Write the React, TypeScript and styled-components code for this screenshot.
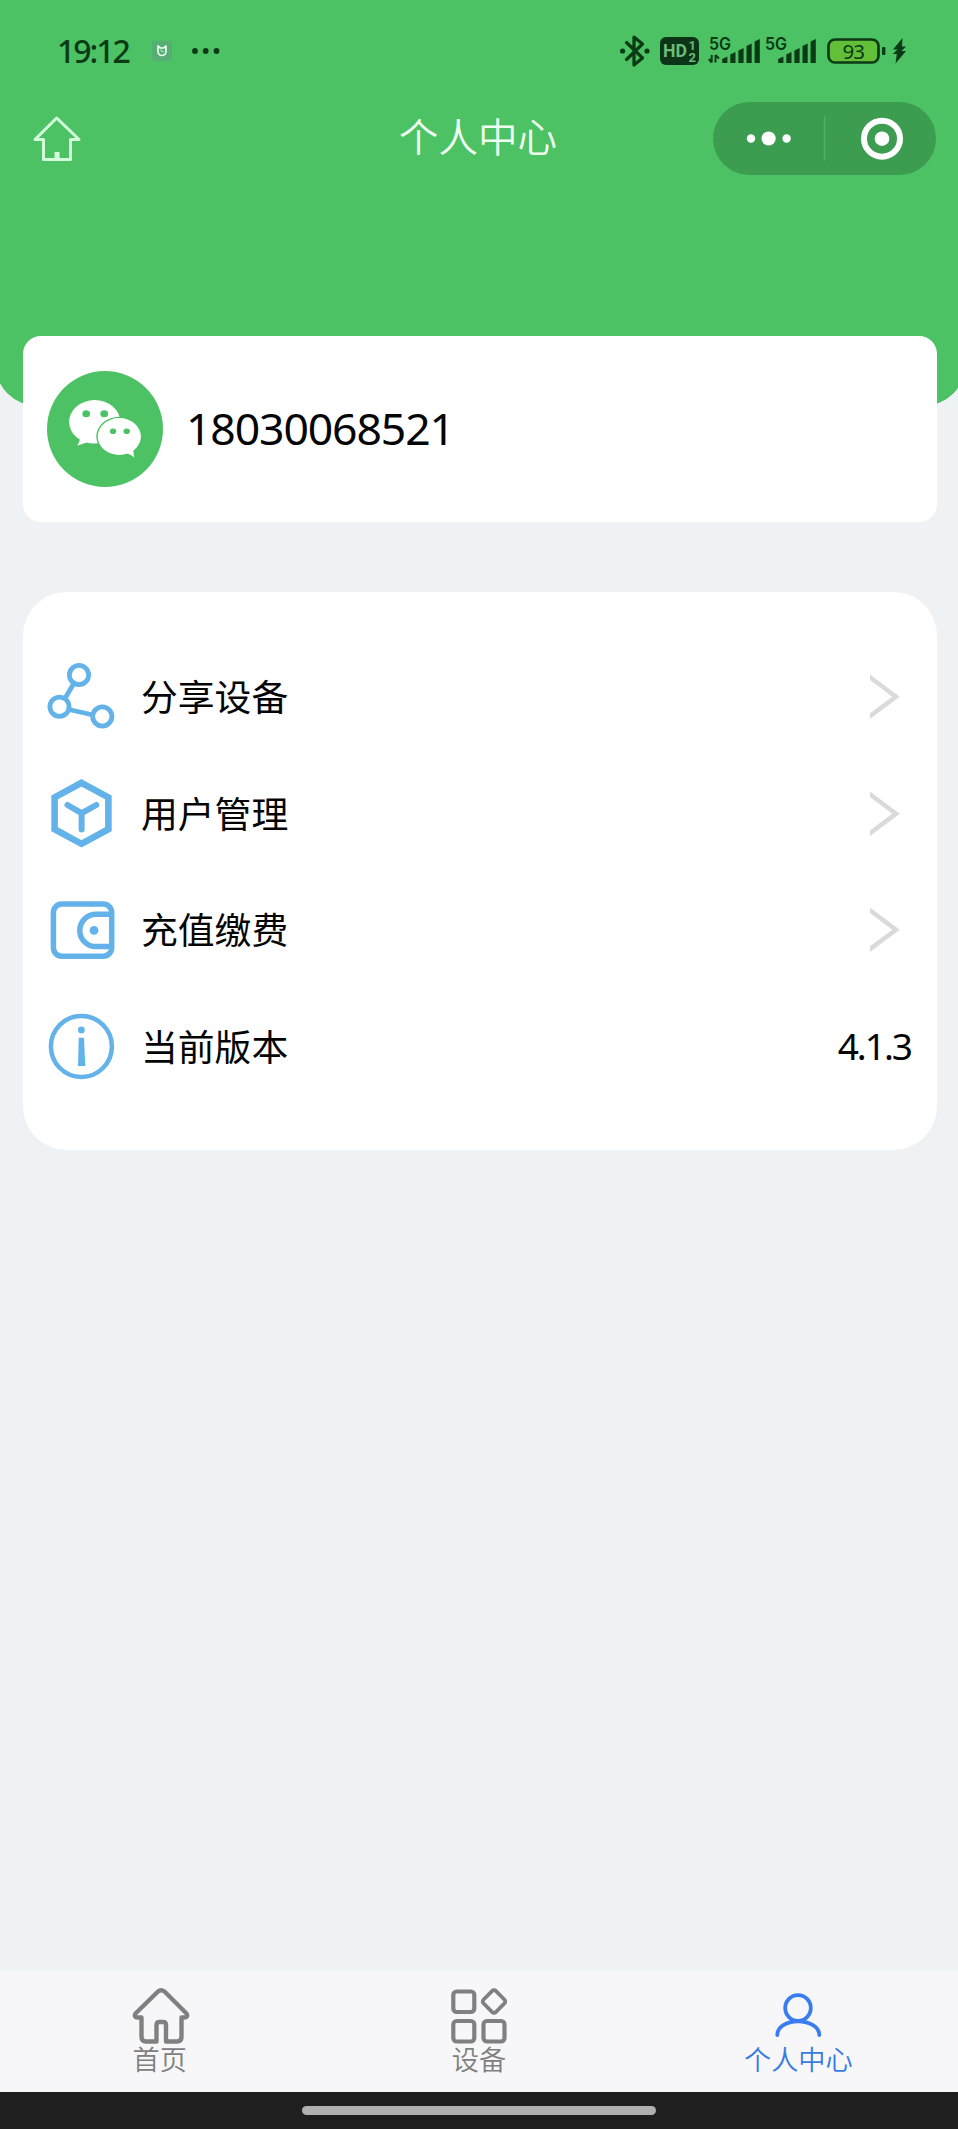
import React from "react";
import styled, { createGlobalStyle } from "styled-components";

const INK = "#0b3a15";
const GREEN = "#4cc264";
const BLUE = "#63b3ea";

const GlobalStyle = createGlobalStyle`
  * { box-sizing: border-box; }
  body {
    margin: 0;
    background: #eff2f5;
    font-family: "Noto Sans", "Noto Sans CJK SC", sans-serif;
    color: #050505;
  }
  svg { display: block; flex: none; }
`;

const Screen = styled.div`
  display: flex;
  flex-direction: column;
  width: 958px;
  height: 2129px;
  overflow: hidden;
  background: #eff2f5;
`;

const Header = styled.header`
  flex: none;
  height: 406px;
  margin: 0 -8px 0 -5px;
  padding: 0 8px 0 5px;
  background: ${GREEN};
  border-radius: 0 0 43px 43px;
`;

const StatusBar = styled.div`
  display: flex;
  align-items: center;
  height: 102px;
  padding: 0 51px 0 57px;
  color: ${INK};
`;

const Clock = styled.span`
  width: 92px;
  font-size: 32px;
  font-weight: 500;
  line-height: 102px;
  letter-spacing: -2px;
`;

const StatusRight = styled.div`
  display: flex;
  align-items: center;
  margin-left: auto;
`;

const Spacer = styled.div<{ $w: number }>`
  flex: none;
  width: ${(p) => p.$w}px;
`;

const NavBar = styled.div`
  display: grid;
  grid-template-columns: 1fr auto 1fr;
  align-items: center;
  height: 73px;
  padding: 0 22px 0 33px;
`;

const Title = styled.h1`
  margin: 0 13px 3px 0;
  font-size: 39.6px;
  font-weight: 350;
  line-height: 60px;
  color: #effff0;
`;

const Capsule = styled.div`
  justify-self: end;
  display: flex;
  align-items: center;
  width: 223px;
  height: 73px;
  border-radius: 37px;
  background: #3c9d51;
`;

const Content = styled.main`
  flex: 1;
  margin-top: -70px;
  padding: 0 21px 0 23px;
`;

const ProfileCard = styled.section`
  display: flex;
  align-items: center;
  height: 186px;
  padding-left: 24px;
  border-radius: 18px;
  background: #fff;
`;

const Phone = styled.span`
  margin: 0 0 2px 23px;
  font-size: 44.5px;
  line-height: 60px;
  letter-spacing: -1.1px;
`;

const MenuCard = styled.section`
  margin-top: 70px;
  height: 558px;
  padding: 46px 25px 0 24px;
  border-radius: 44px;
  background: #fff;
`;

const MenuRow = styled.div`
  display: flex;
  align-items: center;
  height: 116.6px;
`;

const RowLabel = styled.span`
  flex: 1;
  margin: 0 0 2px 26px;
  font-family: "Noto Sans CJK SC", sans-serif;
  font-size: 36.8px;
  line-height: 54px;
`;

const Version = styled.span`
  padding-right: 1px;
  font-size: 37px;
  line-height: 54px;
  letter-spacing: -2px;
`;

const TabBar = styled.nav`
  flex: none;
  display: grid;
  grid-template-columns: repeat(3, 1fr);
  height: 122px;
  background: #f7f7f9;
`;

const Tab = styled.div<{ $active?: boolean }>`
  display: flex;
  flex-direction: column;
  align-items: center;
  padding-top: 16px;
  color: ${(p) => (p.$active ? "#3a7be0" : "#808080")};
`;

const TabLabel = styled.span`
  height: 32px;
  margin-top: -4px;
  font-family: "Noto Sans CJK SC", sans-serif;
  font-size: 27.2px;
  font-weight: 350;
  line-height: 32px;
`;

const GestureBar = styled.div`
  flex: none;
  display: flex;
  justify-content: center;
  height: 37px;
  padding-top: 14px;
  background: #1f1f1f;
`;

const GestureHandle = styled.div`
  width: 354px;
  height: 9px;
  border-radius: 5px;
  background: #b0b0b0;
`;

const AppBadge = () => (
  <svg width="26" height="26" viewBox="0 0 26 26">
    <rect x="3" y="3" width="20" height="20" rx="3" fill="#57ae75" />
    <path d="M9 8v5.500a4 4 0 0 0 8 0V8l-2.500 2h-3z" fill="none" stroke="#e6ffea" strokeWidth="1.700" strokeLinejoin="round" />
    <path d="M11.500 12l3 2" stroke="#e6ffea" strokeWidth="1" />
  </svg>
);

const MoreDots = () => (
  <svg width="30" height="8" viewBox="0 0 30 8" fill={INK}>
    <circle cx="4" cy="4" r="2.900" />
    <circle cx="14.700" cy="4" r="2.900" />
    <circle cx="25.500" cy="4" r="2.900" />
  </svg>
);

const Bluetooth = () => (
  <svg width="30" height="34" viewBox="0 0 30 34" fill="none" stroke={INK} strokeWidth="3.200" strokeLinejoin="round">
    <path d="M6.500 8.500L22.500 24L14 31V3L22.500 10L6.500 25.500" strokeLinecap="round" />
    <circle cx="2.600" cy="17" r="2.600" fill={INK} stroke="none" />
    <circle cx="27" cy="17" r="2.600" fill={INK} stroke="none" />
  </svg>
);

const HdBadge = () => (
  <svg width="39" height="30" viewBox="0 0 39 30">
    <rect x="0" y="1" width="39" height="28" rx="6" fill="#0c3416" />
    <g fill="#69bd79" fontFamily="Roboto, sans-serif" fontWeight="700">
      <text x="3" y="21.200" fontSize="17.500" textLength="24" lengthAdjust="spacingAndGlyphs">HD</text>
      <text x="28.500" y="14" fontSize="13">1</text>
      <text x="28.500" y="26" fontSize="13">2</text>
    </g>
  </svg>
);

const BAR_TOPS = [22.5, 18, 14, 9.5, 5];

const Signal = ({ data }: { data?: boolean }) => (
  <svg width="52" height="38" viewBox="0 -3 52 38" fill={INK}>
    <text x="1" y="15" fontFamily="Inter, sans-serif" fontWeight="600" fontSize="17.500" textLength="22" lengthAdjust="spacingAndGlyphs">
      5G
    </text>
    {data && <path d="M3.700 20v7.500M0.800 24l2.900 3.500M7.500 27.500V20M7.500 20l3.500 3.500" stroke={INK} strokeWidth="2" fill="none" />}
    {BAR_TOPS.map((top, i) => {
      const x = 14.2 + i * 8.1;
      return <path key={i} d={`M${x} 28V${top + 1.5}L${x + 5.2} ${top - 1}V28z`} />;
    })}
  </svg>
);

const Battery = () => (
  <svg width="60" height="28" viewBox="0 0 60 28">
    <rect x="1.500" y="2.500" width="50" height="23" rx="6.500" fill="#62c038" stroke={INK} strokeWidth="2.700" />
    <rect x="55" y="10" width="3.400" height="8" rx="1" fill={INK} />
    <text x="15.500" y="21.500" fontFamily="Noto Sans, sans-serif" fontSize="20.500" fill={INK} textLength="22.500">
      93
    </text>
  </svg>
);

const Bolt = () => (
  <svg width="15" height="28" viewBox="0 0 15 28" fill={INK}>
    <path d="M10.500 1L1 12.500h4.500L.8 17h4L3.500 26.500L14 14H9.500L14 9.500h-4z" />
  </svg>
);

const HomeOutline = () => (
  <svg width="48" height="46" viewBox="0 0 48 46" fill="none" stroke="#d3ffdb" strokeWidth="3" strokeLinejoin="round">
    <path d="M23.700 2L2 23.500H10.500V43.500H37.500V23.500H46z" />
    <path d="M24 36V43" strokeWidth="5" />
  </svg>
);

const CapsuleGlyphs = () => (
  <svg width="223" height="73" viewBox="0 0 223 73" fill="#fff">
    <circle cx="38" cy="36.500" r="4.200" />
    <circle cx="55.600" cy="36.500" r="7.100" />
    <circle cx="73.600" cy="36.500" r="4.200" />
    <path d="M111.500 14.500V58.500" stroke="#55b069" strokeWidth="1.200" />
    <circle cx="169" cy="36.700" r="18" fill="none" stroke="#fff" strokeWidth="6" />
    <circle cx="169" cy="36.700" r="7.300" />
  </svg>
);

const Avatar = () => (
  <svg width="116" height="116" viewBox="0 0 116 116">
    <circle cx="58" cy="58" r="58" fill={GREEN} />
    <g fill="#fff">
      <ellipse cx="47.700" cy="50.800" rx="25.600" ry="21.800" />
      <path d="M33 63Q34 69 30 74.800L42.500 70.500z" />
      <ellipse cx="72.300" cy="65.500" rx="23" ry="19.800" fill={GREEN} />
      <ellipse cx="72.300" cy="65.500" rx="21.600" ry="18.500" />
      <path d="M79 82Q84 83 87.300 86.500Q85.500 81 87 76z" />
    </g>
    <g fill={GREEN}>
      <ellipse cx="39.200" cy="42.700" rx="3.900" ry="3.500" />
      <ellipse cx="57.200" cy="42.700" rx="3.900" ry="3.500" />
      <ellipse cx="66" cy="60.300" rx="3.200" ry="2.800" />
      <ellipse cx="79.700" cy="60.300" rx="3.200" ry="2.800" />
    </g>
  </svg>
);

const RowIcon = styled.svg.attrs({ width: 68, height: 68, viewBox: "0 0 68 68", fill: "none", stroke: BLUE })`
  overflow: visible;
`;

const ShareIcon = () => (
  <RowIcon strokeWidth="4.800">
    <circle cx="32" cy="13" r="9.600" />
    <circle cx="12.500" cy="44.700" r="9.600" />
    <circle cx="55.300" cy="54.500" r="9.600" />
    <path d="M27 21L18 36.500M22 47.500L46 53" />
  </RowIcon>
);

const CubeIcon = () => (
  <RowIcon strokeWidth="6.600">
    <path d="M34.500 3.800L61.400 18.400V50.200L34.500 64.800L7.600 50.200V18.400z" />
    <path d="M20.500 26L34.600 34.200L49.300 26M34.600 34.200V50.500" strokeWidth="6" strokeLinecap="round" />
  </RowIcon>
);

const WalletIcon = () => (
  <RowIcon strokeWidth="5.500">
    <rect x="6.400" y="9" width="58.300" height="52.300" rx="8.500" />
    <path d="M64.700 19.200H49a16.200 16.200 0 0 0 0 32.400H64.700" />
    <circle cx="47" cy="35.400" r="4.400" fill={BLUE} stroke="none" />
  </RowIcon>
);

const InfoIcon = () => (
  <RowIcon strokeWidth="4.500">
    <circle cx="34.400" cy="34.400" r="30.500" />
    <g fill={BLUE} stroke="none">
      <circle cx="34.400" cy="18" r="3.400" />
      <path d="M31.700 25.700H37L38.300 54H31z" />
    </g>
  </RowIcon>
);

const Chevron = styled.svg.attrs({ width: 42, height: 48, viewBox: "0 0 42 48", fill: "none", stroke: "#dadada" })`
  stroke-width: 4.5;
`;

const HomeTabIcon = () => (
  <svg width="60" height="60" viewBox="0 0 60 60" fill="none" stroke="currentColor" strokeWidth="4.400" strokeLinejoin="round">
    <path d="M28 5.500Q31 3 34.500 5.500L56.500 27.500Q58.500 31 54.500 31.500H51.500V51Q51.500 55.500 47 55.500H36V39Q36 36 33 36H29.500Q26.500 36 26.500 39V55.500H16Q11.500 55.500 11.500 51V31.500H7.500Q3.500 31 5.500 27.500z" />
  </svg>
);

const GridTabIcon = () => (
  <svg width="60" height="60" viewBox="0 0 60 60" fill="none" stroke="currentColor" strokeWidth="4.200">
    <rect x="4.300" y="5.500" width="21" height="20.500" rx="3.500" />
    <rect x="4.300" y="35" width="21" height="20.500" rx="3.500" />
    <rect x="34.500" y="35" width="21" height="20.500" rx="3.500" />
    <rect x="-8.700" y="-8.700" width="17.400" height="17.400" rx="2.500" transform="translate(45 15.500) rotate(45)" strokeWidth="3.800" />
  </svg>
);

const PersonTabIcon = () => (
  <svg width="60" height="60" viewBox="0 0 60 60" fill="none" stroke="#3a7df0" strokeWidth="3.800" strokeLinecap="round">
    <circle cx="30" cy="22" r="12.800" />
    <path d="M9.300 49C9.300 41 18.500 35.300 30 35.300S51.300 41 51.300 49" />
  </svg>
);

const menu = [
  { label: "分享设备", icon: <ShareIcon /> },
  { label: "用户管理", icon: <CubeIcon /> },
  { label: "充值缴费", icon: <WalletIcon /> },
  { label: "当前版本", icon: <InfoIcon />, value: "4.1.3" },
];

export default function App() {
  return (
    <>
      <GlobalStyle />
      <Screen>
        <Header>
          <StatusBar>
            <Clock>19:12</Clock>
            <AppBadge />
            <Spacer $w={16} />
            <MoreDots />
            <StatusRight>
              <Bluetooth />
              <Spacer $w={10} />
              <HdBadge />
              <Spacer $w={9} />
              <Signal data />
              <Spacer $w={4} />
              <Signal />
              <Spacer $w={11} />
              <Battery />
              <Spacer $w={5} />
              <Bolt />
            </StatusRight>
          </StatusBar>
          <NavBar>
            <HomeOutline />
            <Title>个人中心</Title>
            <Capsule>
              <CapsuleGlyphs />
            </Capsule>
          </NavBar>
        </Header>
        <Content>
          <ProfileCard>
            <Avatar />
            <Phone>18030068521</Phone>
          </ProfileCard>
          <MenuCard>
            {menu.map((item) => (
              <MenuRow key={item.label}>
                {item.icon}
                <RowLabel>{item.label}</RowLabel>
                {item.value ? (
                  <Version>{item.value}</Version>
                ) : (
                  <Chevron>
                    <path d="M-3 3L26 24.700L-3 46.400" />
                  </Chevron>
                )}
              </MenuRow>
            ))}
          </MenuCard>
        </Content>
        <TabBar>
          <Tab>
            <HomeTabIcon />
            <TabLabel>首页</TabLabel>
          </Tab>
          <Tab>
            <GridTabIcon />
            <TabLabel>设备</TabLabel>
          </Tab>
          <Tab $active>
            <PersonTabIcon />
            <TabLabel>个人中心</TabLabel>
          </Tab>
        </TabBar>
        <GestureBar>
          <GestureHandle />
        </GestureBar>
      </Screen>
    </>
  );
}
